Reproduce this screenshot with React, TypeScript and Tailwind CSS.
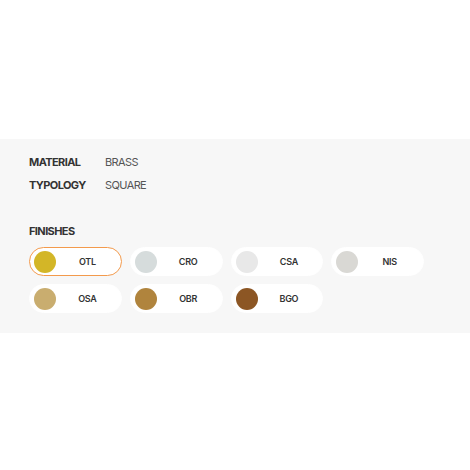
const specs = [
  { label: "MATERIAL", value: "BRASS" },
  { label: "TYPOLOGY", value: "SQUARE" },
];

const finishes = [
  { code: "OTL", color: "#d3b627", active: true },
  { code: "CRO", color: "#d6dcdc" },
  { code: "CSA", color: "#e8e8e8" },
  { code: "NIS", color: "#d9d8d4" },
  { code: "OSA", color: "#c9ad6f" },
  { code: "OBR", color: "#b0843d" },
  { code: "BGO", color: "#8c5624" },
];

export default function App() {
  return (
    <div className="min-h-[470px] bg-white pt-[139px] font-['Inter',sans-serif]">
      <div className="bg-[#f7f7f7] px-[29px] pt-[16px] pb-[20px]">
        <div className="flex flex-col gap-[9px]">
          {specs.map((s) => (
            <div key={s.label} className="flex items-center text-[11px] leading-[14px] tracking-[-0.6px]">
              <span className="w-[76px] font-bold text-[#333]">{s.label}</span>
              <span className="text-[#555]">{s.value}</span>
            </div>
          ))}
        </div>

        <h3 className="mt-[32px] text-[11px] font-bold leading-[14px] tracking-[-0.6px] text-[#333]">FINISHES</h3>

        <div className="mt-[9px] grid w-[395px] grid-cols-4 gap-x-[8px] gap-y-[8px]">
          {finishes.map((f) => (
            <button
              key={f.code}
              className={
                "flex h-[29px] items-center rounded-full bg-white pl-[4px] pr-[2px] " +
                (f.active ? "border-[1.5px] border-[#f39a4c]" : "border-[1.5px] border-white")
              }
            >
              <span className="h-[22px] w-[22px] shrink-0 rounded-full" style={{ background: f.color }} />
              <span className="flex-1 text-center text-[9px] font-semibold tracking-[-0.3px] text-[#333]">{f.code}</span>
            </button>
          ))}
        </div>
      </div>
    </div>
  );
}
